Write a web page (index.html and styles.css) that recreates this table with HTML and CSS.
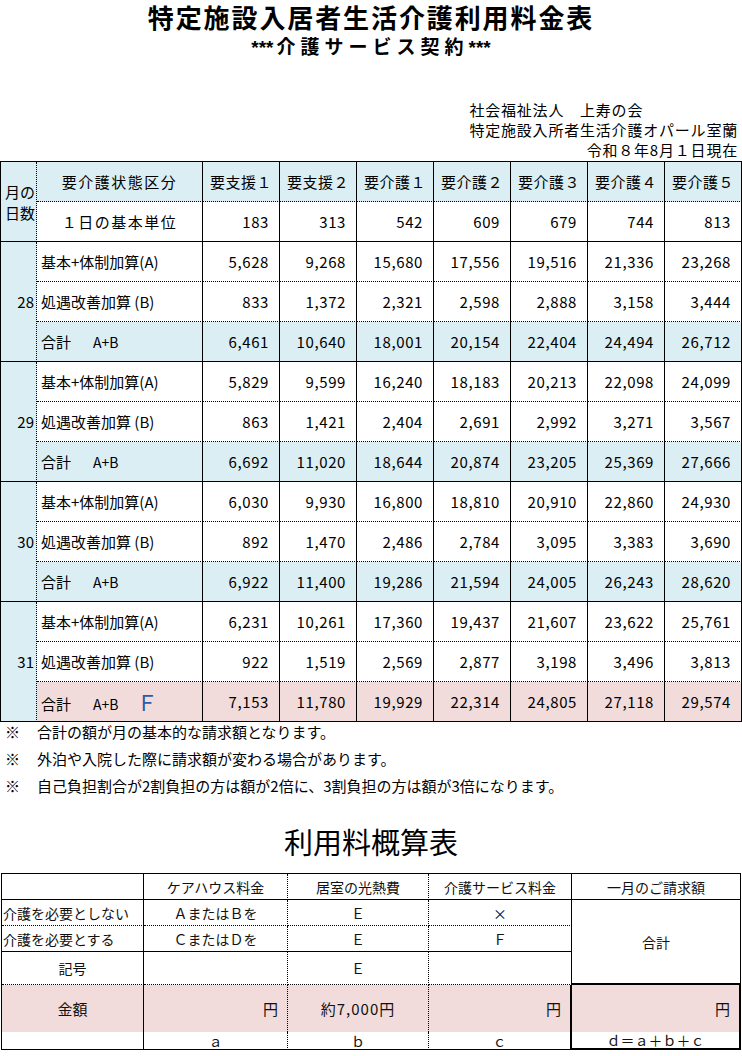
FILE: index.html
```html
<!DOCTYPE html>
<html lang="ja">
<head>
<meta charset="utf-8">
<title>特定施設入居者生活介護利用料金表</title>
<link rel="stylesheet" href="styles.css">
</head>
<body>
<div class="page">
  <header class="head">
    <h1 class="title">特定施設入居者生活介護利用料金表</h1>
    <p class="subtitle"><span class="ast">***</span><span class="sub-jp">介護サービス契約</span><span class="ast">***</span></p>
    <div class="org">
      <p>社会福祉法人　上寿の会</p>
      <p>特定施設入所者生活介護オパール室蘭</p>
      <p class="date">令和８年8月１日現在</p>
    </div>
  </header>

  <table class="fee">
    <colgroup>
      <col class="c-day"><col class="c-label">
      <col class="c-num"><col class="c-num"><col class="c-num"><col class="c-num"><col class="c-num"><col class="c-num"><col class="c-num">
    </colgroup>
    <tr class="r-head">
      <td class="day day-head" rowspan="2">月の<br>日数</td>
      <td class="lab center">要介護状態区分</td>
      <td class="hd">要支援１</td><td class="hd">要支援２</td><td class="hd">要介護１</td><td class="hd">要介護２</td><td class="hd">要介護３</td><td class="hd">要介護４</td><td class="hd">要介護５</td>
    </tr>
    <tr class="r-end">
      <td class="lab center">１日の基本単位</td>
      <td class="num">183</td><td class="num">313</td><td class="num">542</td><td class="num">609</td><td class="num">679</td><td class="num">744</td><td class="num">813</td>
    </tr>

    <tr>
      <td class="day" rowspan="3">28</td>
      <td class="lab">基本+体制加算(A)</td>
      <td class="num">5,628</td><td class="num">9,268</td><td class="num">15,680</td><td class="num">17,556</td><td class="num">19,516</td><td class="num">21,336</td><td class="num">23,268</td>
    </tr>
    <tr>
      <td class="lab">処遇改善加算 (B)</td>
      <td class="num">833</td><td class="num">1,372</td><td class="num">2,321</td><td class="num">2,598</td><td class="num">2,888</td><td class="num">3,158</td><td class="num">3,444</td>
    </tr>
    <tr class="r-end r-sum">
      <td class="lab">合計<span class="ab">A+B</span></td>
      <td class="num">6,461</td><td class="num">10,640</td><td class="num">18,001</td><td class="num">20,154</td><td class="num">22,404</td><td class="num">24,494</td><td class="num">26,712</td>
    </tr>

    <tr>
      <td class="day" rowspan="3">29</td>
      <td class="lab">基本+体制加算(A)</td>
      <td class="num">5,829</td><td class="num">9,599</td><td class="num">16,240</td><td class="num">18,183</td><td class="num">20,213</td><td class="num">22,098</td><td class="num">24,099</td>
    </tr>
    <tr>
      <td class="lab">処遇改善加算 (B)</td>
      <td class="num">863</td><td class="num">1,421</td><td class="num">2,404</td><td class="num">2,691</td><td class="num">2,992</td><td class="num">3,271</td><td class="num">3,567</td>
    </tr>
    <tr class="r-end r-sum">
      <td class="lab">合計<span class="ab">A+B</span></td>
      <td class="num">6,692</td><td class="num">11,020</td><td class="num">18,644</td><td class="num">20,874</td><td class="num">23,205</td><td class="num">25,369</td><td class="num">27,666</td>
    </tr>

    <tr>
      <td class="day" rowspan="3">30</td>
      <td class="lab">基本+体制加算(A)</td>
      <td class="num">6,030</td><td class="num">9,930</td><td class="num">16,800</td><td class="num">18,810</td><td class="num">20,910</td><td class="num">22,860</td><td class="num">24,930</td>
    </tr>
    <tr>
      <td class="lab">処遇改善加算 (B)</td>
      <td class="num">892</td><td class="num">1,470</td><td class="num">2,486</td><td class="num">2,784</td><td class="num">3,095</td><td class="num">3,383</td><td class="num">3,690</td>
    </tr>
    <tr class="r-end r-sum">
      <td class="lab">合計<span class="ab">A+B</span></td>
      <td class="num">6,922</td><td class="num">11,400</td><td class="num">19,286</td><td class="num">21,594</td><td class="num">24,005</td><td class="num">26,243</td><td class="num">28,620</td>
    </tr>

    <tr>
      <td class="day" rowspan="3">31</td>
      <td class="lab">基本+体制加算(A)</td>
      <td class="num">6,231</td><td class="num">10,261</td><td class="num">17,360</td><td class="num">19,437</td><td class="num">21,607</td><td class="num">23,622</td><td class="num">25,761</td>
    </tr>
    <tr>
      <td class="lab">処遇改善加算 (B)</td>
      <td class="num">922</td><td class="num">1,519</td><td class="num">2,569</td><td class="num">2,877</td><td class="num">3,198</td><td class="num">3,496</td><td class="num">3,813</td>
    </tr>
    <tr class="r-end r-total">
      <td class="lab">合計<span class="ab">A+B</span><span class="mark-f">Ｆ</span></td>
      <td class="num">7,153</td><td class="num">11,780</td><td class="num">19,929</td><td class="num">22,314</td><td class="num">24,805</td><td class="num">27,118</td><td class="num">29,574</td>
    </tr>
  </table>

  <ul class="notes">
    <li class="note"><span class="kome">※</span><span>合計の額が月の基本的な請求額となります。</span></li>
    <li class="note"><span class="kome">※</span><span>外泊や入院した際に請求額が変わる場合があります。</span></li>
    <li class="note"><span class="kome">※</span><span>自己負担割合が2割負担の方は額が2倍に、3割負担の方は額が3倍になります。</span></li>
  </ul>

  <h2 class="title2">利用料概算表</h2>

  <table class="calc">
    <colgroup>
      <col class="k0"><col class="k1"><col class="k2"><col class="k3"><col class="k4">
    </colgroup>
    <tr class="q-head">
      <td class="x0"></td>
      <td class="x1">ケアハウス料金</td>
      <td class="x2">居室の光熱費</td>
      <td class="x3">介護サービス料金</td>
      <td class="x4">一月のご請求額</td>
    </tr>
    <tr class="q-row q-dot">
      <td class="x0 left">介護を必要としない</td>
      <td class="x1">ＡまたはＢを</td>
      <td class="x2">Ｅ</td>
      <td class="x3">×</td>
      <td class="x4 sum" rowspan="3">合計</td>
    </tr>
    <tr class="q-row">
      <td class="x0 left">介護を必要とする</td>
      <td class="x1">ＣまたはＤを</td>
      <td class="x2">Ｅ</td>
      <td class="x3">Ｆ</td>
    </tr>
    <tr class="q-sym q-dot">
      <td class="x0">記号</td>
      <td class="x1"></td>
      <td class="x2">Ｅ</td>
      <td class="x3"></td>
    </tr>
    <tr class="q-amt">
      <td class="x0">金額</td>
      <td class="x1 yen">円</td>
      <td class="x2 approx">約7,000円</td>
      <td class="x3 yen box-l">円</td>
      <td class="x4 yen box-top">円</td>
    </tr>
    <tr class="q-foot">
      <td class="x0"></td>
      <td class="x1">ａ</td>
      <td class="x2">ｂ</td>
      <td class="x3 box-l">ｃ</td>
      <td class="x4 box-bot">ｄ＝ａ＋ｂ＋ｃ</td>
    </tr>
  </table>
</div>
</body>
</html>
```

FILE: styles.css
```css
html, body {
  margin: 0;
  padding: 0;
  background: #fff;
}

body {
  font-family: "Noto Sans CJK JP", "Noto Sans", sans-serif;
  color: #000;
}

.page {
  width: 742px;
}

p, h1, h2, ul {
  margin: 0;
  padding: 0;
}

/* ---------- header ---------- */
.head {
  display: flex;
  flex-direction: column;
}

.title {
  margin-top: 4px;
  font-family: "Liberation Sans", "Noto Sans CJK JP", sans-serif;
  font-size: 26px;
  line-height: 30px;
  font-weight: bold;
  letter-spacing: 1.9px;
  text-align: center;
}

.subtitle {
  margin-top: 4px;
  font-family: "Liberation Sans", "Noto Sans CJK JP", sans-serif;
  font-size: 19px;
  line-height: 20px;
  font-weight: bold;
  text-align: center;
}

.subtitle .sub-jp {
  letter-spacing: 5px;
  margin-left: 3px;
}

.subtitle .ast {
  letter-spacing: 0;
}

.org {
  align-self: flex-end;
  margin-top: 42px;
  margin-right: 4px;
  font-size: 15px;
  letter-spacing: 0.8px;
  line-height: 20px;
}

.org .date {
  text-align: right;
}

/* ---------- fee table ---------- */
.fee {
  margin-top: 1px;
  width: 742px;
  table-layout: fixed;
  border-collapse: separate;
  border-spacing: 0;
  border-top: 1px solid #000;
  border-left: 1px solid #000;
  font-size: 15px;
}

.c-day { width: 36px; }
.c-label { width: 166px; }
.c-num { width: 77px; }

.fee tr {
  height: 40px;
}

.fee td {
  padding: 0;
  border-right: 1px solid #000;
  border-bottom: 1px dotted #000;
  white-space: nowrap;
  vertical-align: middle;
}

.fee .r-end td {
  border-bottom: 1px solid #000;
}

.fee .day {
  background: #daeef3;
  border-right: 1px dotted #000;
  border-bottom: 1px solid #000;
  text-align: right;
  padding-right: 2px;
}

.fee .day-head {
  text-align: left;
  padding-left: 4px;
  padding-right: 0;
  line-height: 21px;
}

.fee .r-head td {
  background: #daeef3;
}

.fee .r-sum td {
  background: #daeef3;
}

.fee .r-total td {
  background: #f2dcdb;
}

.fee .r-total td.day,
.fee .r-sum td.day {
  background: #daeef3;
}

.fee .lab {
  padding-left: 4px;
}

.fee .center {
  text-align: center;
  padding-left: 0;
  letter-spacing: 1.5px;
}

.fee .hd {
  text-align: center;
  letter-spacing: 0.5px;
}

.fee .num {
  text-align: right;
  padding-right: 10px;
  letter-spacing: 0.6px;
}

.ab {
  margin-left: 22px;
  font-size: 14px;
}

.mark-f {
  margin-left: 18px;
  font-size: 21px;
  color: #2a5ca8;
  vertical-align: -1px;
}

/* ---------- notes ---------- */
.notes {
  list-style: none;
  display: flex;
  flex-direction: column;
  gap: 12px;
  margin-top: 2px;
  font-size: 15px;
  line-height: 15px;
}

.note {
  display: flex;
}

.kome {
  width: 37px;
  padding-left: 5px;
  box-sizing: border-box;
}

/* ---------- calc table ---------- */
.title2 {
  margin-top: 32px;
  font-size: 29px;
  line-height: 32px;
  font-weight: normal;
  text-align: center;
}

.calc {
  margin-top: 16px;
  margin-left: 1px;
  width: 740px;
  table-layout: fixed;
  border-collapse: separate;
  border-spacing: 0;
  border-top: 1px solid #000;
  border-left: 1px solid #000;
  font-size: 14px;
  color: #111;
}

.k0 { width: 142px; }
.k1 { width: 144px; }
.k2 { width: 141px; }
.k3 { width: 143px; }
.k4 { width: 169px; }

.calc td {
  padding: 0;
  text-align: center;
  white-space: nowrap;
  border-bottom: 1px solid #000;
  line-height: 16px;
}

.calc .x0 { border-right: 1px solid #000; }
.calc .x1 { border-right: 1px dotted #000; }
.calc .x2 { border-right: 1px dotted #000; }
.calc .x3 { border-right: 1px solid #000; }
.calc .x4 { border-right: 1px solid #000; }

.calc .q-head { height: 26px; }
.calc .q-row { height: 26px; }
.calc .q-sym { height: 33px; }
.calc .q-amt { height: 47px; }
.calc .q-foot { height: 18px; }

.calc .q-dot td {
  border-bottom: 1px dotted #000;
}

.calc td.sum {
  border-bottom: 2px solid #000;
}

.calc .left {
  text-align: left;
  padding-left: 1px;
}

.calc .q-amt td {
  background: #f2dcdb;
  border-bottom: none;
  font-size: 15px;
}

.calc .yen {
  text-align: right;
  padding-right: 9px;
}

.calc .approx {
  letter-spacing: 1px;
}

.calc .box-l {
  border-right: 2px solid #000;
}

.calc .box-top {
  border-right: 2px solid #000;
}

.calc .box-bot {
  border-right: 2px solid #000;
  border-bottom: 2px solid #000;
}
```
